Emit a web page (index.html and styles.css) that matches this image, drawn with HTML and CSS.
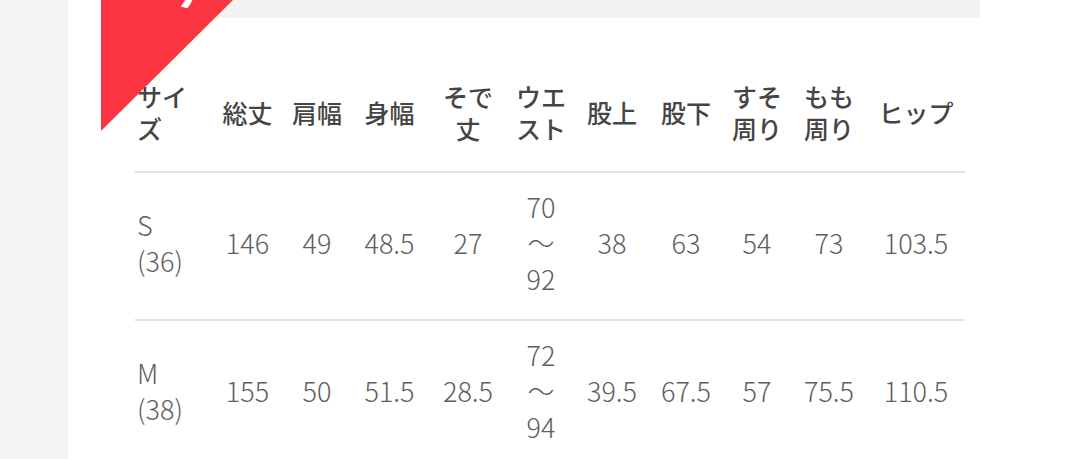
FILE: index.html
```html
<!DOCTYPE html>
<html lang="ja">
<head>
<meta charset="utf-8">
<link rel="stylesheet" href="styles.css">
</head>
<body>
<div class="page">
  <div class="sheet">
    <div class="prev-band"></div>
    <div class="corner"><span class="corner-text">う</span></div>
    <table class="size-table">
      <colgroup>
        <col class="w76"><col class="w73"><col class="w66"><col class="w79"><col class="w78"><col class="w68"><col class="w74"><col class="w74"><col class="w68"><col class="w76"><col class="w98">
      </colgroup>
      <thead>
        <tr>
          <th class="first">サイ<br>ズ</th>
          <th>総丈</th>
          <th>肩幅</th>
          <th>身幅</th>
          <th>そで<br>丈</th>
          <th>ウエ<br>スト</th>
          <th>股上</th>
          <th>股下</th>
          <th>すそ<br>周り</th>
          <th>もも<br>周り</th>
          <th>ヒップ</th>
        </tr>
      </thead>
      <tbody>
        <tr>
          <td class="first">S<br>(36)</td>
          <td>146</td>
          <td>49</td>
          <td>48.5</td>
          <td>27</td>
          <td>70<br>～<br>92</td>
          <td>38</td>
          <td>63</td>
          <td>54</td>
          <td>73</td>
          <td>103.5</td>
        </tr>
        <tr>
          <td class="first">M<br>(38)</td>
          <td>155</td>
          <td>50</td>
          <td>51.5</td>
          <td>28.5</td>
          <td>72<br>～<br>94</td>
          <td>39.5</td>
          <td>67.5</td>
          <td>57</td>
          <td>75.5</td>
          <td>110.5</td>
        </tr>
      </tbody>
    </table>
  </div>
</div>
</body>
</html>
```
FILE: styles.css
```css
html, body {
  margin: 0;
  padding: 0;
}
body {
  background: #f3f3f3;
  width: 1080px;
  height: 459px;
  overflow: hidden;
  font-family: "Noto Sans CJK JP", "Noto Sans", sans-serif;
}
.page {
  margin-left: 68px;
  height: 459px;
  background: #ffffff;
}
.sheet {
  position: relative;
  padding-left: 33px;
  height: 459px;
  overflow: hidden;
}
.prev-band {
  width: 879px;
  height: 18px;
  background: #f2f2f2;
}
.corner {
  position: absolute;
  left: 33px;
  top: 0;
  width: 132px;
  height: 131px;
  background: #fb3441;
  clip-path: polygon(0 0, 100% 0, 0 100%);
  overflow: hidden;
}
.corner-text {
  position: absolute;
  left: 52px;
  top: -36px;
  color: #ffffff;
  font-size: 46px;
  font-weight: 700;
  line-height: 1;
  transform: rotate(-45deg);
}
.size-table {
  margin-top: 36px;
  margin-left: 34px;
  border-collapse: collapse;
  table-layout: fixed;
  width: 830px;
}
.w76 { width: 76px; }
.w73 { width: 73px; }
.w66 { width: 66px; }
.w79 { width: 79px; }
.w78 { width: 78px; }
.w68 { width: 68px; }
.w74 { width: 74px; }
.w98 { width: 98px; }
.size-table th {
  height: 115px;
  padding: 0 0 2px;
  font-size: 25px;
  line-height: 32px;
  font-weight: 500;
  color: #454545;
  text-align: center;
  vertical-align: middle;
  border-bottom: 2px solid #e2e2e2;
}
.size-table td {
  height: 140px;
  padding: 0 0 6px;
  font-size: 27px;
  line-height: 36px;
  font-weight: 300;
  color: #5e5e5e;
  text-align: center;
  vertical-align: middle;
  border-bottom: 2px solid #e2e2e2;
}
.size-table .first {
  text-align: left;
  padding-left: 2px;
}
```
